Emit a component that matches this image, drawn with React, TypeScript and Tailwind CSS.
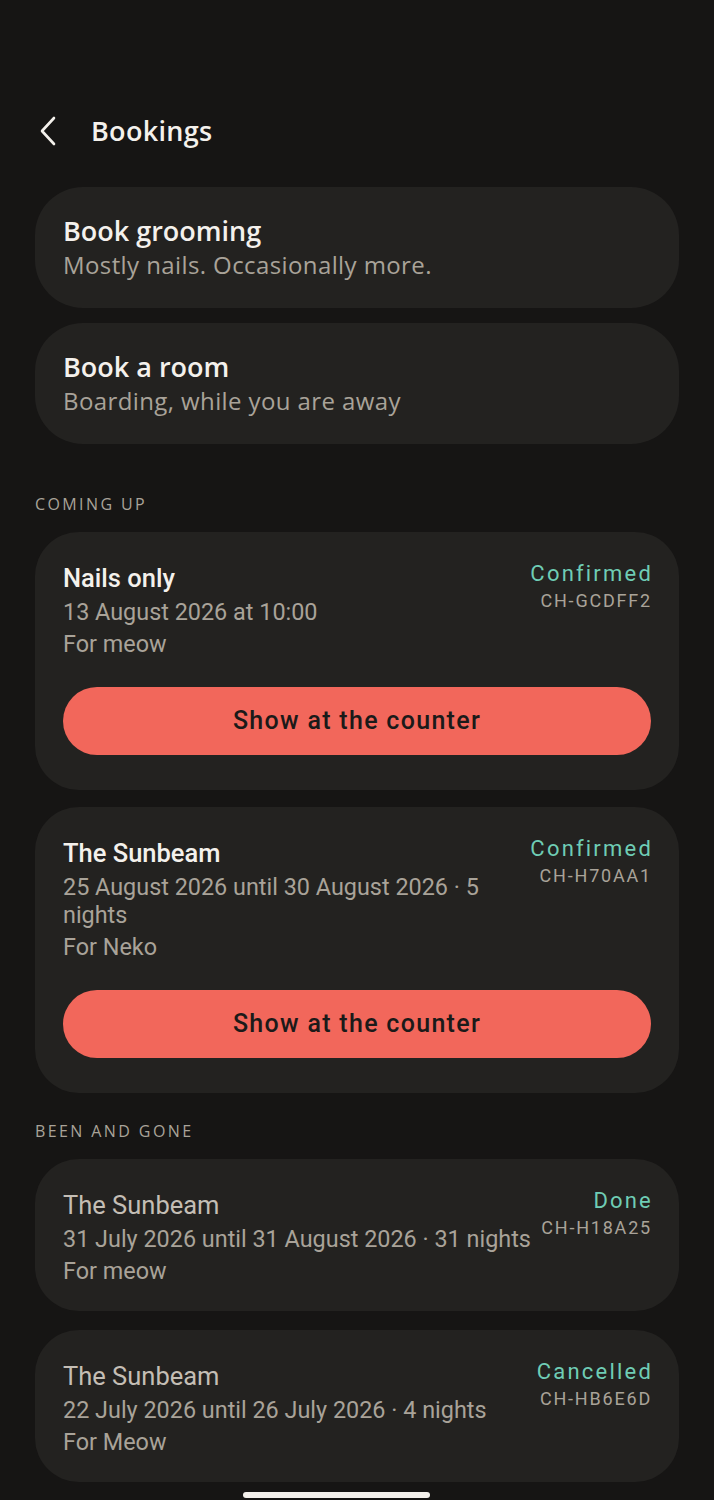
import React from "react";

const cardFont = { fontFamily: 'Roboto, "Noto Sans", sans-serif' };
const topFont = { fontFamily: '"Open Sans", "Noto Sans", sans-serif' };

type Booking = {
  title: string;
  date: string;
  pet: string;
  status: string;
  code: string;
  past?: boolean;
  action?: boolean;
};

const upcoming: Booking[] = [
  { title: "Nails only", date: "13 August 2026 at 10:00", pet: "For meow", status: "Confirmed", code: "CH-GCDFF2", action: true },
  { title: "The Sunbeam", date: "25 August 2026 until 30 August 2026 · 5 nights", pet: "For Neko", status: "Confirmed", code: "CH-H70AA1", action: true },
];

const past: Booking[] = [
  { title: "The Sunbeam", date: "31 July 2026 until 31 August 2026 · 31 nights", pet: "For meow", status: "Done", code: "CH-H18A25", past: true },
  { title: "The Sunbeam", date: "22 July 2026 until 26 July 2026 · 4 nights", pet: "For Meow", status: "Cancelled", code: "CH-HB6E6D", past: true },
];

function BookingCard({ b }: { b: Booking }) {
  return (
    <div className={`rounded-[44px] bg-[#232220] px-[28px] pt-[31px] ${b.action ? "pb-[35px]" : "pb-[26px]"}`} style={cardFont}>
      <div className="flex items-start justify-between gap-[4px]">
        <div className="flex min-w-0 flex-col">
          <div className={`text-[25.5px] leading-[30px] ${b.past ? "text-[#c4beb5]" : "text-[#f4f1ec] font-medium"}`}>{b.title}</div>
          <div className="mt-[5px] text-[23.4px] leading-[28px] text-[#a9a399]">{b.date}</div>
          <div className="mt-[4px] text-[23.4px] leading-[28px] text-[#a9a399]">{b.pet}</div>
        </div>
        <div className="-mt-[1px] flex shrink-0 flex-col items-end">
          <div className="-mr-[2px] text-[22px] leading-[24px] tracking-[2.2px] text-[#6fcdb5]">{b.status}</div>
          <div className="-mr-[1px] mt-[4px] text-[18px] leading-[22px] tracking-[1.8px] text-[#a9a399]">{b.code}</div>
        </div>
      </div>
      {b.action && (
        <div className="mt-[29px] flex h-[68px] items-center justify-center rounded-full bg-[#f2675b] text-[25px] font-medium tracking-[1.3px] text-[#1b1a19]">
          Show at the counter
        </div>
      )}
    </div>
  );
}

function QuickCard({ title, sub }: { title: string; sub: string }) {
  return (
    <div className="flex h-[121px] flex-col justify-center rounded-[48px] bg-[#232220] px-[28px]" style={topFont}>
      <div className="text-[27px] font-semibold leading-[34px] text-[#f4f1ec]">{title}</div>
      <div className="mt-[1px] text-[24px] leading-[32px] tracking-[0.4px] text-[#a9a399]">{sub}</div>
    </div>
  );
}

function SectionLabel({ children }: { children: React.ReactNode }) {
  return (
    <div className="text-[16px] leading-[20px] tracking-[2.4px] text-[#a9a399]" style={topFont}>
      {children}
    </div>
  );
}

export default function App() {
  return (
    <div className="relative min-h-[1500px] w-full bg-[#161514] px-[35px]">
      <div className="flex h-[187px] flex-col">
        <div className="mt-[111px] flex items-center">
          <svg width="22" height="36" viewBox="0 0 22 36" className="ml-[1px]">
            <polyline points="18,5 6,18 18,31" fill="none" stroke="#f4f1ec" strokeWidth="2.6" strokeLinecap="round" strokeLinejoin="round" />
          </svg>
          <div className="ml-[33px] text-[27px] font-semibold tracking-[0.3px] text-[#f4f1ec]" style={topFont}>
            Bookings
          </div>
        </div>
      </div>
      <div className="flex flex-col gap-[15px]">
        <QuickCard title="Book grooming" sub="Mostly nails. Occasionally more." />
        <QuickCard title="Book a room" sub="Boarding, while you are away" />
      </div>
      <div className="mt-[50px]">
        <SectionLabel>COMING UP</SectionLabel>
      </div>
      <div className="mt-[18px] flex flex-col gap-[17px]">
        {upcoming.map((b, i) => (
          <BookingCard key={i} b={b} />
        ))}
      </div>
      <div className="mt-[28px]">
        <SectionLabel>BEEN AND GONE</SectionLabel>
      </div>
      <div className="mt-[18px] flex flex-col gap-[19px]">
        {past.map((b, i) => (
          <BookingCard key={i} b={b} />
        ))}
      </div>
      <div className="absolute bottom-[2px] left-[243px] h-[6px] w-[187px] rounded-full bg-[#f4f1ec]" />
    </div>
  );
}
